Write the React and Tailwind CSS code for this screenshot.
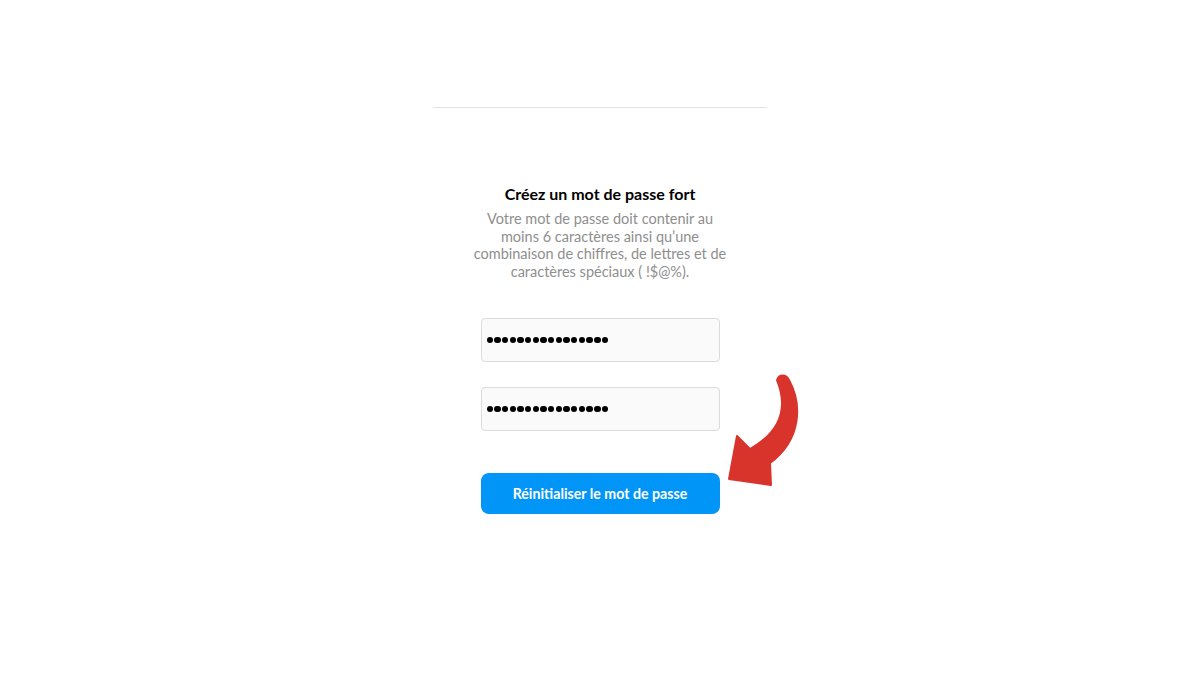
import React from "react";

function Dots() {
  return (
    <div className="flex items-center gap-[1.3px]">
      {Array.from({ length: 16 }).map((_, i) => (
        <span key={i} className="block w-[6.4px] h-[6.4px] rounded-full bg-black" />
      ))}
    </div>
  );
}

export default function App() {
  return (
    <div className="w-[1200px] h-[675px] bg-white flex flex-col items-center" style={{ fontFamily: 'Lato, "Noto Sans", sans-serif' }}>
      <div className="mt-[107px] w-[334px] h-px bg-[#e2e2e2]" />
      <div className="mt-[77px] flex flex-col items-center w-[280px]">
        <h2 className="text-[16px] font-bold text-black leading-[18px]">Créez un mot de passe fort</h2>
        <p className="mt-[7px] text-[14.5px] leading-[17.5px] text-[#8e8e8e] text-center">
          Votre mot de passe doit contenir au
          <br />
          moins 6 caractères ainsi qu’une
          <br />
          combinaison de chiffres, de lettres et de
          <br />
          caractères spéciaux ( !$@%).
        </p>
      </div>
      <div className="mt-[38px] w-[239px] flex flex-col">
        <div className="h-[44px] w-full rounded-[4px] border border-[#dbdbdb] bg-[#fafafa] px-[5px] flex items-center">
          <Dots />
        </div>
        <div className="mt-[25px] h-[44px] w-full rounded-[4px] border border-[#dbdbdb] bg-[#fafafa] px-[5px] flex items-center">
          <Dots />
        </div>
        <div className="relative mt-[42px]">
          <button className="h-[41px] w-full rounded-[8px] bg-[#0095f6] text-white text-[14.2px] font-bold">
            Réinitialiser le mot de passe
          </button>
          <svg className="absolute left-[239px] top-[-104px]" width="80" height="120" viewBox="0 0 80 120">
            <path
              d="M57 11 C59 5 66 5 69 11 C82 35 82 70 50 94 L51 116 L9 110 L17 67 L30 80 C62 62 68 38 57 11 Z"
              fill="#d8342c"
              stroke="#d8342c"
              strokeWidth="2"
              strokeLinejoin="round"
            />
          </svg>
        </div>
      </div>
    </div>
  );
}
